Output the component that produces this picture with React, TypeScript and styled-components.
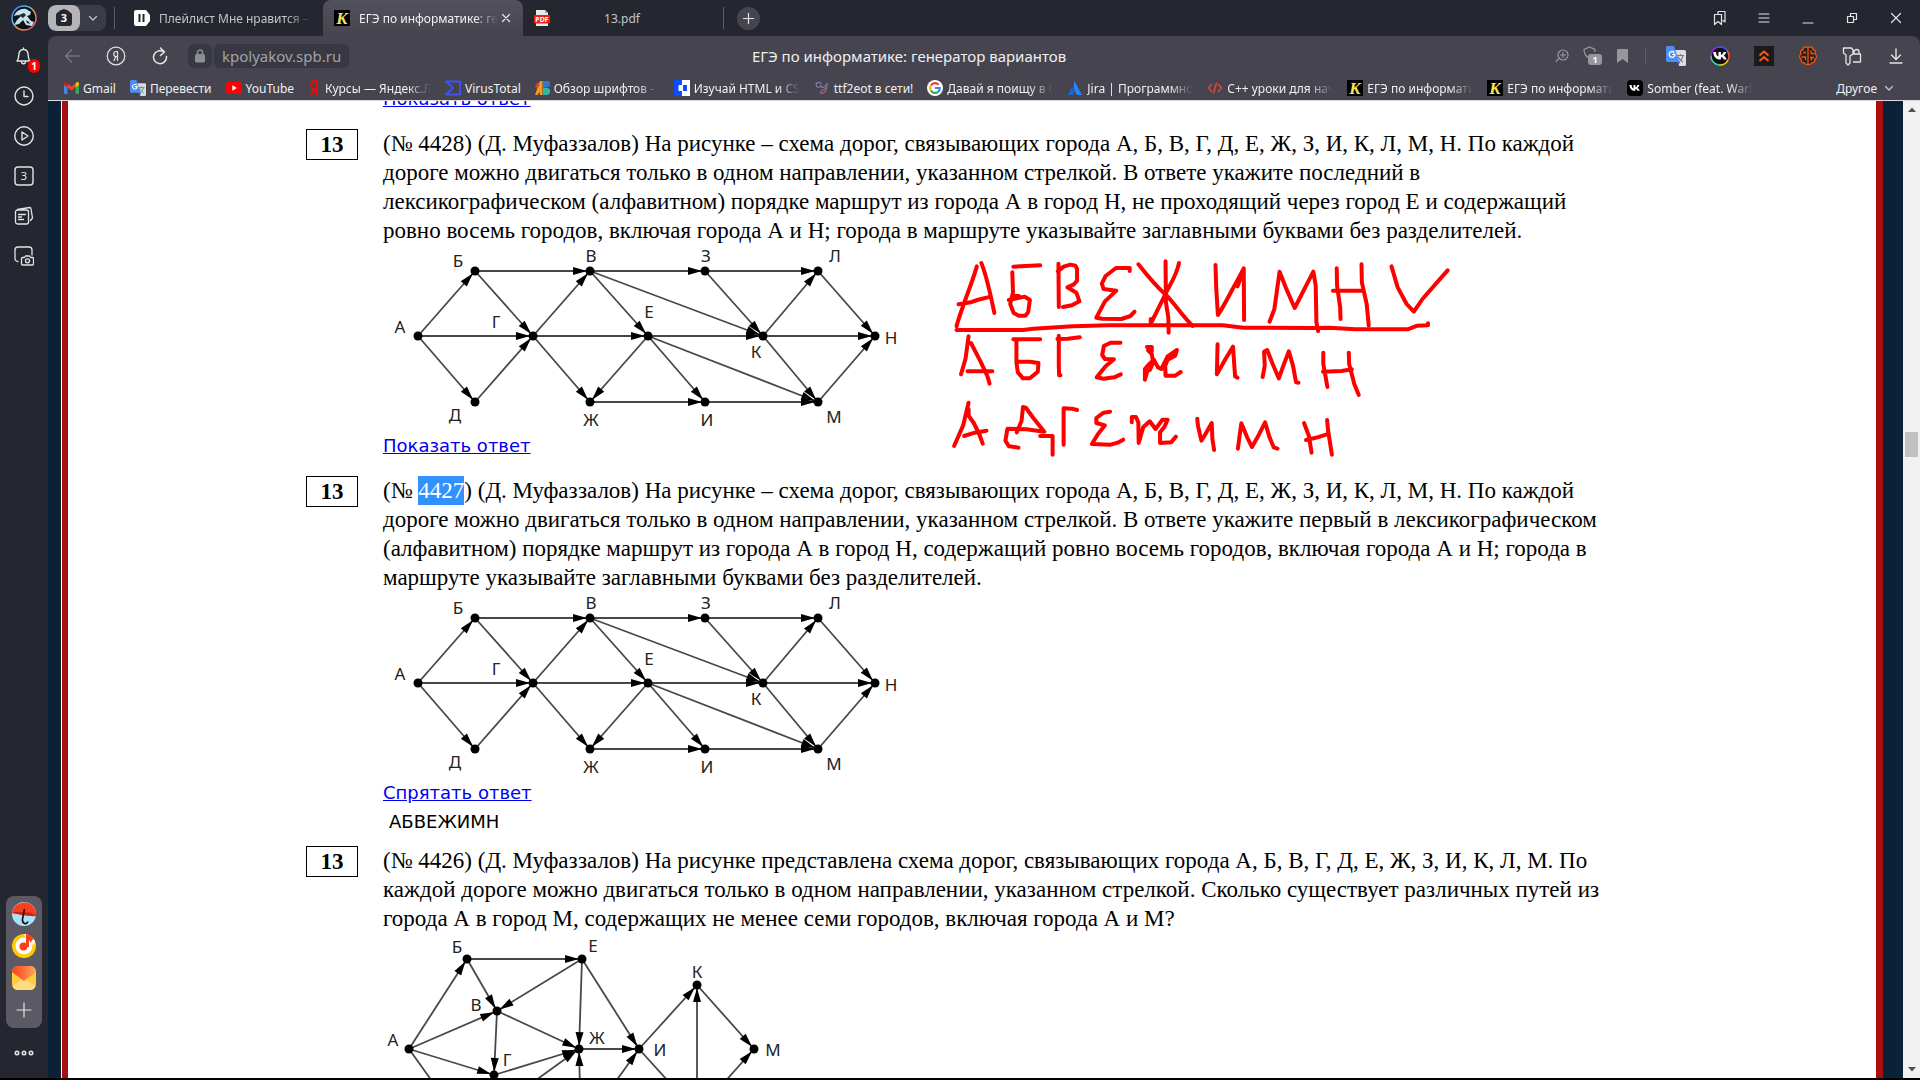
import React from 'react';
import styled, { createGlobalStyle, css } from 'styled-components';

const Global = createGlobalStyle`
  *, *::before, *::after { box-sizing: border-box; }
  body { margin: 0; background: #000; }
  button { font: inherit; color: inherit; background: none; border: 0; padding: 0; margin: 0; }
  a { color: inherit; text-decoration: none; }
  svg { display: block; flex: none; }
`;

const ui = '"Noto Sans", "Open Sans", sans-serif';

const Window = styled.div`
  height: 100vh;
  display: flex;
  flex-direction: column;
  background: #24272f;
  border-bottom: 2px solid #000;
  font-family: ${ui};
  color: #e9e9ec;
  overflow: hidden;
`;

/* ---------- tab strip ---------- */
const TabStrip = styled.header`
  display: flex;
  align-items: center;
  height: 36px;
  flex: none;
  padding-right: 2px;
`;
const Slot = styled.button<{ $w?: number }>`
  width: ${p => p.$w ?? 44}px;
  height: 36px;
  flex: none;
  display: flex;
  align-items: center;
  justify-content: center;
`;
const GroupPill = styled.button`
  display: flex;
  align-items: center;
  width: 58px;
  height: 26px;
  border-radius: 8px;
  background: #3c3c46;
  overflow: hidden;
`;
const GroupCount = styled.span`
  width: 32px;
  height: 26px;
  border-radius: 8px;
  background: #b5b4b9;
  display: flex;
  align-items: center;
  justify-content: center;
  margin-right: 8px;
`;
const Divider = styled.span<{ $m: number; $h?: number }>`
  width: 1px;
  height: ${p => p.$h ?? 22}px;
  background: #5d5d66;
  margin: 0 ${p => p.$m}px;
  flex: none;
`;
const Tab = styled.div<{ $active?: boolean }>`
  display: flex;
  align-items: center;
  gap: 9px;
  width: 200px;
  height: 36px;
  padding: 0 12px 0 11px;
  font-size: 12px;
  color: #c4c4c9;
  ${p => p.$active && css`
    background: linear-gradient(#53525c, #46454f);
    border-radius: 8px 8px 0 0;
    color: #f2f2f4;
  `}
`;
const fade = css`
  overflow: hidden;
  white-space: nowrap;
  mask-image: linear-gradient(to right, #000 calc(100% - 24px), transparent);
`;
const TabText = styled.span<{ $center?: boolean }>`
  flex: 1;
  min-width: 0;
  ${p => (p.$center ? css`text-align: center; padding-right: 26px;` : fade)}
`;
const TabClose = styled.button`
  margin-left: -6px;
`;
const AddTab = styled.span`
  width: 23px;
  height: 23px;
  border-radius: 50%;
  background: #46454f;
  display: grid;
  place-items: center;
`;
const Spacer = styled.span`
  flex: 1;
`;

/* ---------- body ---------- */
const Body = styled.div`
  flex: 1;
  min-height: 0;
  display: flex;
`;
const Side = styled.nav`
  width: 48px;
  flex: none;
  display: flex;
  flex-direction: column;
  align-items: center;
`;
const SideButton = styled.button`
  width: 40px;
  height: 40px;
  display: grid;
  place-items: center;
  position: relative;
`;
const Badge = styled.span`
  position: absolute;
  right: 4px;
  bottom: 3px;
  width: 12px;
  height: 14px;
  border-radius: 6px;
  background: #f00;
  color: #fff;
  font-size: 10px;
  font-weight: 700;
  line-height: 14px;
  text-align: center;
`;
const Dock = styled.div`
  width: 36px;
  margin-top: auto;
  padding: 2px 0;
  border-radius: 8px;
  background: #5b5a64;
  display: flex;
  flex-direction: column;
`;
const DockButton = styled.button`
  height: 32px;
  display: grid;
  place-items: center;
`;
const MoreButton = styled.button`
  height: 50px;
  width: 40px;
  display: grid;
  place-items: center;
`;

const View = styled.div`
  flex: 1;
  min-width: 0;
  display: flex;
  flex-direction: column;
`;
const Bars = styled.div`
  background: #46454f;
  border-radius: 8px 8px 0 0;
  flex: none;
`;
const Toolbar = styled.div`
  display: flex;
  align-items: center;
  height: 40px;
  padding: 0 2px;
`;
const Lock = styled.button`
  width: 24px;
  height: 24px;
  margin: 0 2px 0 6px;
  border-radius: 6px;
  background: #373841;
  display: grid;
  place-items: center;
`;
const Domain = styled.button`
  height: 24px;
  padding: 0 8px;
  border-radius: 6px;
  background: #373841;
  color: #a2a2a9;
  font-size: 15px;
  line-height: 24px;
`;
const PageTitle = styled.span`
  flex: 1;
  padding-right: 78px;
  text-align: center;
  font-size: 15px;
  color: #f0f0f2;
  white-space: nowrap;
`;
const Bookmarks = styled.div`
  display: flex;
  align-items: center;
  gap: 14px;
  height: 24px;
  padding: 0 26px 0 16px;
  font-size: 12px;
  color: #f0f0f2;
`;
const Bookmark = styled.a`
  display: flex;
  align-items: center;
  gap: 4px;
  white-space: nowrap;
`;
const BookmarkText = styled.span<{ $cut?: boolean }>`
  ${p => p.$cut && css`width: 106px; ${fade}`}
`;
const Other = styled.button`
  display: flex;
  align-items: center;
  gap: 7px;
  margin-left: auto;
`;

/* ---------- page ---------- */
const PageArea = styled.div`
  flex: 1;
  min-height: 0;
  display: flex;
  border-top: 1px solid #dcdcde;
  background: #0b2138;
`;
const Page = styled.main`
  flex: 1;
  min-width: 0;
  margin: 0 20px 0 13px;
  border-left: 1px solid #fff;
  overflow: hidden;
  color: #000;
  font-family: "Liberation Serif", "Times New Roman", serif;
  font-size: 23px;
  line-height: 29px;
`;
const Frame = styled.div`
  background: #fff;
  min-height: 100%;
  border: solid #a81010;
  border-width: 0 7px 0 6px;
`;
const TaskList = styled.div`
  max-width: 1332px;
  margin: 0 auto;
`;
const Task = styled.article<{ $gap?: number }>`
  display: grid;
  grid-template-columns: 52px 1fr;
  column-gap: 25px;
  align-items: start;
  margin-bottom: ${p => p.$gap ?? 16}px;
`;
const Previous = styled(Task)`
  margin-top: -17px;
`;
const Num = styled.div`
  height: 31px;
  border: 1px solid #000;
  font-weight: 700;
  text-align: center;
`;
const TaskBody = styled.div`
  grid-column: 2;
  position: relative;
`;
const Text = styled.p`
  margin: 0;
  padding-right: 26px;
`;
const Picked = styled.mark`
  background: #3390ff;
  color: #fff;
  display: inline-block;
`;
const Answer = styled.div`
  font-family: "DejaVu Sans", Verdana, sans-serif;
  font-size: 18px;
  height: 29px;
`;
const AnswerLink = styled.a`
  color: #0000ee;
  text-decoration: underline;
`;
const AnswerText = styled(Answer)`
  padding-left: 6px;
`;
const Ink = styled.svg`
  position: absolute;
  left: 547px;
  top: 120px;
  fill: none;
  stroke: #fe0000;
  stroke-linecap: round;
  stroke-linejoin: round;
  stroke-width: 4px;
  path { vector-effect: non-scaling-stroke; }
`;
const Scroll = styled.div`
  width: 17px;
  flex: none;
  background: #f1f1f1;
  display: flex;
  flex-direction: column;
  align-items: center;
  justify-content: space-between;
`;
const ScrollTrack = styled.div`
  flex: 1;
  padding-top: 314px;
`;
const ScrollThumb = styled.div`
  width: 13px;
  height: 25px;
  background: #c1c1c1;
`;
const ScrollButton = styled.button`
  width: 17px;
  height: 17px;
  display: grid;
  place-items: center;
`;

/* ---------- graphs ---------- */
type Pt = [number, number];
type GraphData = { h: number; nodes: Record<string, Pt>; labels: Record<string, Pt>; edges: string };

const graphA: GraphData = {
  h: 186,
  nodes: {
    А: [35, 91], Б: [92, 26], Д: [92, 157], Г: [150, 91], В: [207, 26], Ж: [207, 157], Е: [265, 91],
    З: [322, 26], И: [322, 157], К: [380, 91], Л: [435, 26], М: [435, 157], Н: [492, 91],
  },
  labels: {
    А: [17, 82], Б: [75, 16], Д: [72, 170], Г: [113, 77], В: [208, 11], Ж: [208, 175], Е: [266, 67],
    З: [323, 11], И: [324, 175], К: [373, 107], Л: [452, 11], М: [451, 172], Н: [508, 93],
  },
  edges: 'АБ АГ АД БВ БГ ДГ ГВ ГЕ ГЖ ВЗ ВЕ ВК ЕЖ ЕИ ЕМ ЕК ЖИ ИМ ЗЛ ЗК КЛ КН КМ ЛН МН',
};
const graphB: GraphData = {
  h: 210,
  nodes: {
    А: [26, 116], Б: [84, 26], В: [114, 78], Г: [111, 142], Е: [199, 26], Ж: [196, 116], И: [256, 116],
    К: [314, 52], М: [371, 116], Д: [84, 197], З: [198, 197], Л: [314, 180],
  },
  labels: {
    А: [10, 107], Б: [74, 14], В: [93, 72], Г: [124, 127], Е: [210, 13], Ж: [214, 105], И: [277, 117],
    К: [314, 39], М: [390, 117],
  },
  edges: 'АБ АВ АГ АД БЕ БВ ЕВ ЕЖ ЕИ ВГ ВЖ ГЖ ДЖ ЗЖ ЗИ ЖИ ИК ИЛ ЛК ЛМ КМ',
};

function Graph({ data }: { data: GraphData }) {
  return (
    <svg width="530" height={data.h} role="img" aria-label="Схема дорог">
      {data.edges.split(' ').map(e => {
        const [x1, y1] = data.nodes[e[0]];
        const [x2, y2] = data.nodes[e[1]];
        const len = Math.hypot(x2 - x1, y2 - y1);
        const ux = (x2 - x1) / len, uy = (y2 - y1) / len;
        const bx = x2 - ux * 17, by = y2 - uy * 17;
        const tx = x2 - ux * 3, ty = y2 - uy * 3;
        return (
          <g key={e}>
            <line x1={x1} y1={y1} x2={x2} y2={y2} stroke="#484848" strokeWidth="1.8" />
            <polygon points={`${tx},${ty} ${bx - uy * 4},${by + ux * 4} ${bx + uy * 4},${by - ux * 4}`} fill="#000" />
          </g>
        );
      })}
      {Object.entries(data.nodes).map(([k, [x, y]]) => <circle key={k} cx={x} cy={y} r="4.5" fill="#000" />)}
      {Object.entries(data.labels).map(([k, [x, y]]) => (
        <text key={k} x={x} y={y + 6} textAnchor="middle" fontFamily='"Noto Sans", sans-serif' fontSize="17" fill="#222">{k}</text>
      ))}
    </svg>
  );
}

/* ---------- icons ---------- */
const Line = ({ d, w = 20, c = '#e4e4e8', s = 1.4, children }: { d?: string; w?: number; c?: string; s?: number; children?: React.ReactNode }) => (
  <svg width={w} height={w} viewBox={`0 0 ${w} ${w}`} fill="none" stroke={c} strokeWidth={s} strokeLinecap="round" strokeLinejoin="round">
    {d && <path d={d} />}
    {children}
  </svg>
);
const KIcon = () => (
  <svg width="16" height="16" viewBox="0 0 16 16">
    <rect width="16" height="16" fill="#000" />
    <text x="8" y="14" textAnchor="middle" fontFamily='"Liberation Serif", serif' fontStyle="italic" fontWeight="700" fontSize="17" fill="#f5e65a">K</text>
  </svg>
);
const VkPath = 'M2.500 5h2c.2 2 1 3.300 2 3.500V5h1.900v2.300c1-.2 1.800-1.200 2.100-2.300h1.900c-.3 1.300-1.100 2.300-2 2.900 1 .5 1.900 1.300 2.300 2.900h-2.100c-.3-1.100-1.200-1.800-2.200-1.900v1.900h-.4C4.800 10.800 2.600 8.800 2.500 5z';
const VkSquare = () => (
  <svg width="16" height="16" viewBox="0 0 16 16"><rect width="16" height="16" rx="4" fill="#000" /><path d={VkPath} fill="#fff" /></svg>
);
const Translate = ({ w = 16 }: { w?: number }) => (
  <svg width={w} height={w} viewBox="0 0 20 20">
    <path d="M8 4h10.500a1.500 1.500 0 0 1 1.500 1.500v13a1.500 1.500 0 0 1-1.500 1.500H13z" fill="#dcdde0" />
    <path d="M11 9.500h7M14.500 8v1.500M12 10.500c1 2.500 3 4.500 5 5.500M17 9.500c-.5 3-2.500 5-4 6.200" stroke="#6d7f8f" strokeWidth="1.200" fill="none" />
    <path d="M11 16h3l-2 4z" fill="#3a5bd0" />
    <path d="M1.500 0H8l5.500 16h-12A1.500 1.500 0 0 1 0 14.500v-13A1.500 1.500 0 0 1 1.500 0z" fill="#4c8df6" />
    <path d="M8.300 6.500A2.900 2.900 0 1 0 9 8.300H6.200" stroke="#fff" strokeWidth="1.300" fill="none" />
  </svg>
);
const Gmail = () => (
  <svg width="15" height="12" viewBox="0 0 15 12">
    <path d="M0 2v9a1 1 0 0 0 1 1h2.500V4.500z" fill="#4285f4" />
    <path d="M15 2v9a1 1 0 0 1-1 1h-2.500V4.500z" fill="#34a853" />
    <path d="M3.500 1.500v4l4 3 4-3v-4l-4 3z" fill="#ea4335" />
    <path d="M11.500 1.500v4L15 3V1.700C15 .2 13.500-.4 12.500.6z" fill="#fbbc04" />
    <path d="M3.500 1.500v4L0 3V1.700C0 .2 1.500-.4 2.500.6z" fill="#c5221f" />
  </svg>
);
const YouTube = () => (
  <svg width="16" height="12" viewBox="0 0 16 12"><rect width="16" height="12" rx="3" fill="#f00" /><path d="M6.300 3.300v5.400L10.900 6z" fill="#fff" /></svg>
);
const YaLetter = () => (
  <svg width="13" height="17" viewBox="0 0 12 17"><path d="M8.500 16V1H6.500C4 1 2.500 2.800 2.500 5s1.300 4 3.500 4h2.500M6 9l-4 7" stroke="#f00808" strokeWidth="1.900" fill="none" /></svg>
);
const VirusTotal = () => <Line w={16} c="#3d55f5" s={1.8} d="M1 1.500h14v13H1L8 8z" />;
const FontsIcon = () => (
  <svg width="15" height="14" viewBox="0 0 15 14">
    <path d="M0 14L5 0h2.500v14H5l-.5-3-2 3z" fill="#f59a1c" /><path d="M0 5l3-4 1.500 3-3 4z" fill="#d9402c" />
    <path d="M8 0h3.500a3 3 0 0 1 1.500 6L8 7z" fill="#2f78d6" /><path d="M8 7h4a3.500 3.500 0 0 1-.5 7H8z" fill="#36b6a0" />
  </svg>
);
const HtmlIcon = () => (
  <svg width="16" height="16" viewBox="0 0 16 16"><rect width="16" height="16" fill="#fff" /><path d="M0 0h8v5H4.500v6H8v5H0z" fill="#0a4dff" /><path d="M9 5h4v6H9z" fill="#0a4dff" /></svg>
);
const EotIcon = () => (
  <Line w={16} c="#8a7fb5" s={1.100} d="M7 3.500C4.500 1 1 3 2.500 6c1 2 4 1.500 4.500-1 0 3 3 4 6-1.500"><path d="M13 3.500c0 5-1.500 9.500-5 10-2 .2-2-2 0-3s4-2 5-3.500" stroke="#a4688f" /></Line>
);
const Google = () => (
  <svg width="16" height="16" viewBox="0 0 16 16">
    <circle cx="8" cy="8" r="8" fill="#fff" />
    <g fill="none" strokeWidth="2.200"><path d="M11.600 4.700A4.800 4.800 0 0 0 3.900 5.500" stroke="#ea4335" /><path d="M3.900 5.500a4.800 4.800 0 0 0 0 5" stroke="#fbbc05" /><path d="M3.900 10.500a4.800 4.800 0 0 0 7.200 1.300" stroke="#34a853" /><path d="M11.100 11.800A4.800 4.800 0 0 0 12.800 8H8" stroke="#4285f4" /></g>
  </svg>
);
const Jira = () => (
  <svg width="16" height="16" viewBox="-1 -1 16 16"><path d="M6.500 0L14 14H9C6 10 5 5 6.500 0z" fill="#2684ff" /><path d="M4 6c2 2 2.500 5 1 8H0z" fill="#1868db" /></svg>
);
const Code = () => <Line w={16} c="#dc4a38" s={1.500} d="M4.500 4.500l-3 3.500 3 3.500M11.500 4.500l3 3.500-3 3.500M9.500 3l-3 10" />;
const Pdf = () => (
  <svg width="16" height="16" viewBox="0 0 16 16"><path d="M2 0h9l3 3v13H2z" fill="#e9e9e9" /><path d="M11 0l3 3h-3z" fill="#aaa" /><rect y="5" width="16" height="8.500" rx="1" fill="#ee1c1c" /><text x="8" y="11.800" textAnchor="middle" fontFamily='"Noto Sans", sans-serif' fontWeight="700" fontSize="7" fill="#fff">PDF</text></svg>
);
const Chevron = () => <Line w={10} s={1.200} c="#c8c8cc" d="M1.500 3.500L5 7l3.500-3.500" />;

const bookmarks: [React.ReactNode, string, boolean?][] = [
  [<Gmail />, 'Gmail'],
  [<Translate />, 'Перевести'],
  [<YouTube />, 'YouTube'],
  [<YaLetter />, 'Курсы — Яндекс.Л', true],
  [<VirusTotal />, 'VirusTotal'],
  [<FontsIcon />, 'Обзор шрифтов -', true],
  [<HtmlIcon />, 'Изучай HTML и CS', true],
  [<EotIcon />, 'ttf2eot в сети!'],
  [<Google />, 'Давай я поищу в G', true],
  [<Jira />, 'Jira | Программно', true],
  [<Code />, 'C++ уроки для нач', true],
  [<KIcon />, 'ЕГЭ по информати', true],
  [<KIcon />, 'ЕГЭ по информати', true],
  [<VkSquare />, 'Somber (feat. Warl', true],
];

const inkStrokes = [
  'M77 232C90 180 120 110 136 52M149 42C165 80 178 150 187 192M83 166L118 160 137 153 176 143',
  'M242 53L320 49M239 70L241 130 233 165 243 192 258 200 277 200 285 190 290 153 275 143 229 153M240 140L258 141',
  'M373 44L374 174M371 67L388 53 408 47 422 50 427 60 427 95 418 106 399 115 425 131 434 157 412 169 386 174',
  'M580 66V57H540L510 81 499 104 504 120 541 125 508 157 483 206 500 209 556 210 582 201 594 188',
  'M605 46C635 85 660 115 683 136S735 205 763 231M723 42C717 78 695 110 683 136S655 195 641 224V210M684 37L685 160 692 205 693 251',
  'M829 48L831 115 836 198C855 170 875 125 892 95L911 58 912 213M911 62L893 112V100',
  'M986 218L1000 180 1015 68 1034 118 1059 177 1113 68 1120 110 1122 220 1127 246',
  'M1181 58L1182 110 1191 175 1192 210M1253 46L1254 100 1268 165 1274 230M1170 125H1254',
  'M1340 52L1358 115 1384 165 1405 188 1430 150 1503 64',
  'M77 243H270L300 239 415 232 520 229H850L910 236 1105 237 1160 236 1235 241H1387L1415 230 1446 229V223',
  'M90 376L103 330 112 262M119 282L148 340 167 382 173 404M109 367H181',
  'M242 271H320M251 271V340L255 370 270 388H290L313 368 315 342 290 338H252',
  'M435 265L400 269 370 270M374 260V350L375 379H379',
  'M553 281H524L505 291 500 318 508 330 534 331 510 352 484 385 504 389 535 385 554 376',
  'M630 294H644V307L633 304 644 315 648 340 639 362 631 366 624 392V360L632 350 650 332 662 355 672 360 690 322 717 303 712 320 690 332 683 350 684 380H712L728 369',
  'M835 286L833 376 858 330 880 293 883 340 886 382 893 386',
  'M966 384L972 350 970 308 979 303 995 345 1013 388 1026 350 1042 307 1054 350 1063 400 1070 401',
  'M1142 311V345L1149 385 1154 414M1216 311L1217 345 1232 405 1245 438M1141 368L1195 366 1225 361',
  'M70 591L96 530 112 461M112 480V500L127 522 143 555 153 584M99 561L130 551 164 545',
  'M252 550L266 515 270 474 279 477 300 507 332 548 280 541 225 539 219 575 229 592 257 596M320 561H356V617',
  'M388 587V478L412 479 427 483',
  'M523 488L504 491 483 507V522L508 529 488 555 470 585 525 587 545 581 561 572',
  'M586 520V504H598L605 520 606 582 619 535 638 517 655 540 675 512H690L680 535 668 550V582L700 580 714 563',
  'M776 509L778 530 788 575 800 555 818 522 820 570 825 603',
  'M894 599L899 560 904 523 921 565 935 594 955 557 973 520 986 565 998 595 1009 599',
  'M1086 522L1100 560 1108 611M1153 513L1156 545 1167 617M1092 573L1125 565 1152 556',
];

export default function App() {
  return (
    <Window>
      <Global />
      <TabStrip>
        <Slot $w={48} aria-label="Профиль">
          <svg width="26" height="26" viewBox="0 0 26 26">
            <defs><linearGradient id="ring" x1="0" y1="0" x2="1" y2="1"><stop offset="0" stopColor="#5f6bff" /><stop offset=".35" stopColor="#35c8ff" /><stop offset=".6" stopColor="#ff9d2e" /><stop offset="1" stopColor="#e033b0" /></linearGradient></defs>
            <circle cx="13" cy="13" r="12" fill="#0d1219" stroke="url(#ring)" strokeWidth="1.500" />
            <path d="M3 11C5 6 10 3 15 4l5 3-1 3-3 1 4 5 3 1-2 4-6-1-3-5-4 4-5 1 3-5 4-4-3-1z" fill="#c9e2ea" />
            <path d="M8 10l5-2 2 2-3 3zM15 15l3 2 1 2-3-1z" fill="#1b2a36" />
          </svg>
        </Slot>
        <GroupPill aria-label="Группа вкладок">
          <GroupCount>
            <svg width="18" height="18" viewBox="0 0 18 18"><path d="M5 1.500L9 0l4 1.500 4 3.500v9a3 3 0 0 1-3 3H4a3 3 0 0 1-3-3V5z" fill="#24272f" /><text x="9" y="13" textAnchor="middle" fontFamily={ui} fontWeight="700" fontSize="11" fill="#fff">3</text></svg>
          </GroupCount>
          <Chevron />
        </GroupPill>
        <Divider $m={8} />
        <Tab>
          <svg width="16" height="16" viewBox="0 0 16 16"><path d="M2 0h10l4 5v6l-4 5H2a2 2 0 0 1-2-2V2a2 2 0 0 1 2-2z" fill="#fff" /><path d="M4.500 4h2v8h-2zM8.500 4h2v8h-2z" fill="#24272f" /></svg>
          <TabText>Плейлист Мне нравится —</TabText>
        </Tab>
        <Tab $active>
          <KIcon />
          <TabText>ЕГЭ по информатике: ген</TabText>
          <TabClose aria-label="Закрыть вкладку"><Line w={10} s={1.200} d="M1.500 1.500l7 7M8.500 1.500l-7 7" /></TabClose>
        </Tab>
        <Tab>
          <Pdf />
          <TabText $center>13.pdf</TabText>
        </Tab>
        <Divider $m={0} />
        <Slot $w={48} aria-label="Новая вкладка"><AddTab><Line w={11} s={1.200} d="M5.500 .5v10M.5 5.500h10" /></AddTab></Slot>
        <Spacer />
        <Slot aria-label="Закладки"><Line w={16} s={1.200} d="M2.500 4.500h7v10L6 11.500l-3.500 3zM6 4V1.500h7V12l-2-1.500" /></Slot>
        <Slot aria-label="Меню"><Line w={12} s={1.200} d="M1 2h10M1 6h10M1 10h10" /></Slot>
        <Slot aria-label="Свернуть"><Line w={12} s={1.200} d="M1 11h10" /></Slot>
        <Slot aria-label="Восстановить"><Line w={12} s={1.200} d="M1.500 4.500h6v6h-6zM4.500 4V1.500h6v6H8" /></Slot>
        <Slot aria-label="Закрыть"><Line w={12} s={1.200} d="M1.500 1.500l9 9M10.500 1.500l-9 9" /></Slot>
      </TabStrip>

      <Body>
        <Side>
          <SideButton aria-label="Уведомления"><Line w={20} d="M9.500 2v1.500M3 15c2-2 1.500-4.500 2-7.500C5.500 5 7.500 3.500 9.500 3.500S13.500 5 14 7.500c.5 3 0 5.500 2 7.500zM7.500 15.500c0 3 4 3 4 0" /><Badge>1</Badge></SideButton>
          <SideButton aria-label="История"><Line d="M10 5v5.500h4"><circle cx="10" cy="10" r="9" /></Line></SideButton>
          <SideButton aria-label="Видео"><Line d="M8 6l6 4-6 4z"><circle cx="10" cy="10" r="9.200" /></Line></SideButton>
          <SideButton aria-label="Вкладки"><Line><rect x="1" y="1" width="18" height="18" rx="3" /><text x="10" y="14" textAnchor="middle" fontFamily={ui} fontSize="11" fill="#e4e4e8" stroke="none">3</text></Line></SideButton>
          <SideButton aria-label="Заметки"><Line s={1.300} d="M3.500 4h9a2 2 0 0 1 2 2v10a2 2 0 0 1-2 2h-9a2 2 0 0 1-2-2V6a2 2 0 0 1 2-2zM4.500 8.500h7M4.500 11h3M4.500 13.500h5M3.500 3.500l12-2a1.500 1.500 0 0 1 1.500 1.500l1.500 9-2 2.500" /></SideButton>
          <SideButton aria-label="Снимок экрана"><Line s={1.300} d="M4 15.500a3 3 0 0 1-3-3V4a3 3 0 0 1 3-3h11a3 3 0 0 1 3 3v5M8.500 11.500h2l1-1.500h4l1 1.500h2a1 1 0 0 1 1 1v5.500a1 1 0 0 1-1 1h-10a1 1 0 0 1-1-1v-5.500a1 1 0 0 1 1-1z"><circle cx="13.500" cy="14.800" r="2" /></Line></SideButton>
          <Dock>
            <DockButton aria-label="Погода"><svg width="24" height="24" viewBox="0 0 24 24"><circle cx="12" cy="12" r="12" fill="#a9e3fa" /><path d="M0 11a12 12 0 0 1 24 3C18 15 6 12 0 11z" fill="#fb3f1d" /><path d="M0 11q6-2 12-.5 7-1 12 3.500Q12 14 0 11z" fill="#c9250e" /><path d="M12.500 7l-2 10c-.6 5 4 6 5.500 2.500" stroke="#111" strokeWidth="1.600" fill="none" /></svg></DockButton>
            <DockButton aria-label="Музыка"><svg width="24" height="24" viewBox="0 0 24 24"><circle cx="12" cy="12" r="12" fill="#fc0" /><circle cx="12" cy="12" r="8.500" fill="#fff" /><path d="M12 0h3l8 7-1 4-7-3z" fill="#fff" /><circle cx="11.500" cy="12.500" r="4" fill="#fb3f1d" /><path d="M14 0c3 .5 6 2 8 5l-2 1-1 3-2-3v7h-3z" fill="#fb3f1d" /></svg></DockButton>
            <DockButton aria-label="Почта"><svg width="24" height="24" viewBox="0 0 24 24"><defs><linearGradient id="flap"><stop offset="0" stopColor="#fb3f1d" /><stop offset="1" stopColor="#ffa55c" /></linearGradient></defs><rect width="24" height="24" rx="6" fill="#ffcc3e" /><path d="M12 12L23.500 20A6 6 0 0 1 18 24H6A6 6 0 0 1 .5 20z" fill="#ffdc7d" /><path d="M0 6a6 6 0 0 1 6-6h12a6 6 0 0 1 6 6L12 15z" fill="url(#flap)" /></svg></DockButton>
            <DockButton aria-label="Добавить"><Line w={16} s={1.200} d="M8 1v14M1 8h14" /></DockButton>
          </Dock>
          <MoreButton aria-label="Ещё"><Line w={20} s={1.600}><circle cx="3" cy="10" r="1.700" /><circle cx="10" cy="10" r="1.700" /><circle cx="17" cy="10" r="1.700" /></Line></MoreButton>
        </Side>

        <View>
          <Bars>
            <Toolbar>
              <Slot aria-label="Назад"><Line w={16} c="#77777f" s={1.300} d="M15 8H1.500M7.500 2l-6 6 6 6" /></Slot>
              <Slot aria-label="Яндекс"><Line w={20} s={1.200} d="M11.500 14.500v-9H10c-3 0-3 5 0 5h1.500M10 10.500l-2 4"><circle cx="10" cy="10" r="8.800" /></Line></Slot>
              <Slot aria-label="Обновить"><Line w={18} s={1.500} d="M13 5A6.500 6.500 0 1 0 15.500 9.500M9.500 1L13.500 5 9.500 8.500" /></Slot>
              <Lock aria-label="Защищённое соединение"><svg width="10" height="14" viewBox="0 0 10 14"><rect y="5" width="10" height="8.500" rx="1.500" fill="#8d8d95" /><path d="M2.500 6V3.500a2.500 2.500 0 0 1 5 0V6" stroke="#8d8d95" strokeWidth="1.500" fill="none" /></svg></Lock>
              <Domain>kpolyakov.spb.ru</Domain>
              <PageTitle>ЕГЭ по информатике: генератор вариантов</PageTitle>
              <Slot $w={30} aria-label="Масштаб"><Line w={14} c="#96969e" s={1.200} d="M4.500 9L1 12.500M5.500 6h5M8 3.500v5"><circle cx="8" cy="6" r="5" /></Line></Slot>
              <Slot $w={30} aria-label="Защита"><svg width="20" height="20" viewBox="0 0 20 20"><path d="M7 12C3 10 2 7 2 3.500L7.500 1 13 3.500V6" stroke="#96969e" strokeWidth="1.200" fill="none" /><rect x="6" y="8" width="14" height="11" rx="3" fill="#96969e" /><text x="13" y="17" textAnchor="middle" fontFamily={ui} fontWeight="700" fontSize="9" fill="#fff">1</text></svg></Slot>
              <Slot $w={30} aria-label="В закладки"><svg width="11" height="14" viewBox="0 0 11 14"><path d="M1 0h9a1 1 0 0 1 1 1v13l-5.500-4L0 14V1a1 1 0 0 1 1-1z" fill="#96969e" /></svg></Slot>
              <Divider $m={8} $h={16} />
              <Slot aria-label="Переводчик"><Translate w={20} /></Slot>
              <Slot aria-label="ВКонтакте"><svg width="20" height="20" viewBox="0 0 20 20"><circle cx="10" cy="10" r="9" fill="#101014" /><g fill="none" strokeWidth="1.500"><path d="M1 10a9 9 0 0 1 6-8.500" stroke="#a020f0" /><path d="M7 1.500a9 9 0 0 1 10 3" stroke="#3b5bff" /><path d="M17 4.500A9 9 0 0 1 18 14" stroke="#ff5a36" /><path d="M18 14a9 9 0 0 1-9 5" stroke="#ffd400" /><path d="M9 19a9 9 0 0 1-8-9" stroke="#2bd9a0" /></g><path d={VkPath} transform="translate(0 -.5) scale(1.300)" fill="#fff" /></svg></Slot>
              <Slot aria-label="Расширение"><svg width="20" height="20" viewBox="0 0 20 20"><rect width="20" height="20" fill="#1c1a1b" /><path d="M5.500 9.500L10 5.500l4.500 4M5.500 15l4.500-4 4.500 4" stroke="#ff5a14" strokeWidth="1.800" fill="none" /></svg></Slot>
              <Slot aria-label="Мозг"><svg width="20" height="20" viewBox="0 0 20 20" fill="#2c2018" stroke="#f2560f" strokeWidth="1.300"><path d="M10 2C8 0 5 1 5 3.500 2.500 4 2 6 3 8c-2 1-2 4 0 5 0 3 1.500 4 3.500 4 1 2 3 2 3.500.5zM10 2c2-2 5-1 5 1.500 2.500.5 3 2.500 2 4.500 2 1 2 4 0 5 0 3-1.500 4-3.500 4-1 2-3 2-3.500.5z" /><path d="M5 6.500h3M3.500 11h4v3M13 4.500v3h3M12 11.500h4M13.500 11.500v3" fill="none" /></svg></Slot>
              <Slot aria-label="Пароли"><Line w={20} s={1.300} d="M1.500 2h8l1.500 2v4L8 10v7l-2 2-2-2V9L1.500 7zM12 8V6a2 2 0 0 1 5 0v2M11.500 8h7v8h-7" /></Slot>
              <Slot aria-label="Загрузки"><Line w={16} d="M8 1v10.500M3.500 7L8 11.500 12.500 7M2 15h12" /></Slot>
            </Toolbar>
            <Bookmarks>
              {bookmarks.map(([icon, label, cut], i) => (
                <Bookmark href="#" key={i}>{icon}<BookmarkText $cut={cut}>{label}</BookmarkText></Bookmark>
              ))}
              <Other>Другое <Chevron /></Other>
            </Bookmarks>
          </Bars>

          <PageArea>
            <Page>
              <Frame>
                <TaskList>
                  <Previous>
                    <TaskBody><Answer><AnswerLink href="#">Показать ответ</AnswerLink></Answer></TaskBody>
                  </Previous>
                  <Task>
                    <Num>13</Num>
                    <TaskBody>
                      <Text>(№ 4428) (Д. Муфаззалов) На рисунке – схема дорог, связывающих города А, Б, В, Г, Д, Е, Ж, З, И, К, Л, М, Н. По каждой дороге можно двигаться только в одном направлении, указанном стрелкой. В ответе укажите последний в лексикографическом (алфавитном) порядке маршрут из города А в город Н, не проходящий через город Е и содержащий ровно восемь городов, включая города А и Н; города в маршруте указывайте заглавными буквами без разделителей.</Text>
                      <Graph data={graphA} />
                      <Answer><AnswerLink href="#">Показать ответ</AnswerLink></Answer>
                      <Ink width="540" height="220" viewBox="0 0 1568 660" preserveAspectRatio="none" role="img" aria-label="Рукописные пометки">
                        {inkStrokes.map((d, i) => <path key={i} d={d} />)}
                      </Ink>
                    </TaskBody>
                  </Task>
                  <Task $gap={10}>
                    <Num>13</Num>
                    <TaskBody>
                      <Text>(№ <Picked>4427</Picked>) (Д. Муфаззалов) На рисунке – схема дорог, связывающих города А, Б, В, Г, Д, Е, Ж, З, И, К, Л, М, Н. По каждой дороге можно двигаться только в одном направлении, указанном стрелкой. В ответе укажите первый в лексикографическом (алфавитном) порядке маршрут из города А в город Н, содержащий ровно восемь городов, включая города А и Н; города в маршруте указывайте заглавными буквами без разделителей.</Text>
                      <Graph data={graphA} />
                      <Answer><AnswerLink href="#">Спрятать ответ</AnswerLink></Answer>
                      <AnswerText>АБВЕЖИМН</AnswerText>
                    </TaskBody>
                  </Task>
                  <Task>
                    <Num>13</Num>
                    <TaskBody>
                      <Text>(№ 4426) (Д. Муфаззалов) На рисунке представлена схема дорог, связывающих города А, Б, В, Г, Д, Е, Ж, З, И, К, Л, М. По каждой дороге можно двигаться только в одном направлении, указанном стрелкой. Сколько существует различных путей из города А в город М, содержащих не менее семи городов, включая города А и М?</Text>
                      <Graph data={graphB} />
                    </TaskBody>
                  </Task>
                </TaskList>
              </Frame>
            </Page>
            <Scroll>
              <ScrollButton aria-label="Вверх"><svg width="8" height="5" viewBox="0 0 8 5"><path d="M0 5l4-4.500L8 5z" fill="#505050" /></svg></ScrollButton>
              <ScrollTrack><ScrollThumb /></ScrollTrack>
              <ScrollButton aria-label="Вниз"><svg width="8" height="5" viewBox="0 0 8 5"><path d="M0 0l4 4.500L8 0z" fill="#505050" /></svg></ScrollButton>
            </Scroll>
          </PageArea>
        </View>
      </Body>
    </Window>
  );
}
